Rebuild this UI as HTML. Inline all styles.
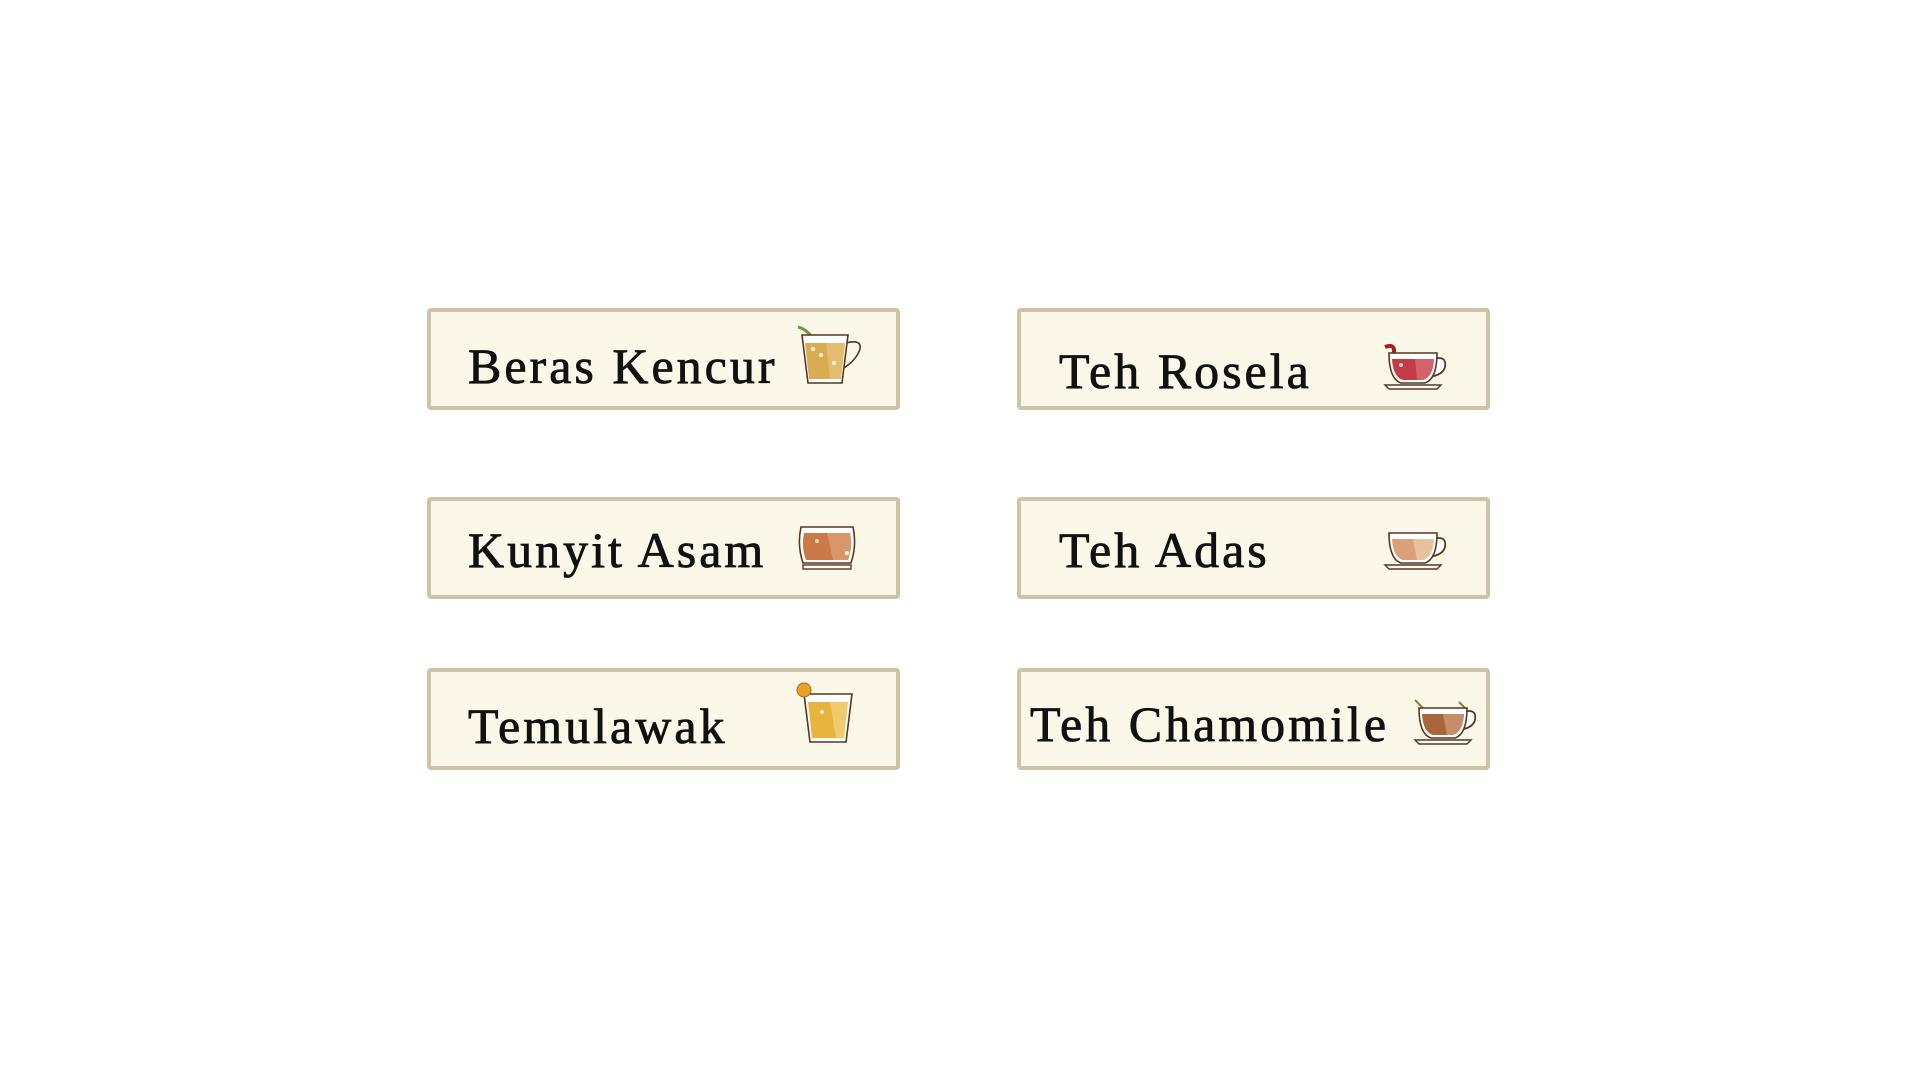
<!DOCTYPE html>
<html><head><meta charset="utf-8"><style>
html,body{margin:0;padding:0;background:#fff;width:1920px;height:1080px;overflow:hidden}
.b{position:absolute;width:465px;height:94px;border:4px solid #cdc3a6;border-radius:4px;background:#fbf8e9;box-sizing:content-box}
.t{position:absolute;font-family:"Liberation Serif",serif;font-size:50px;color:#111;white-space:nowrap;line-height:1;letter-spacing:3px;-webkit-text-stroke:0.8px #111}
svg{position:absolute}
</style></head><body>
<div class="b" style="left:427px;top:308px"></div>
<div class="b" style="left:1017px;top:308px"></div>
<div class="b" style="left:427px;top:497px"></div>
<div class="b" style="left:1017px;top:497px"></div>
<div class="b" style="left:427px;top:668px"></div>
<div class="b" style="left:1017px;top:668px"></div>

<div class="t" style="left:468px;top:341px">Beras Kencur</div>
<div class="t" style="left:1059px;top:346px">Teh Rosela</div>
<div class="t" style="left:468px;top:525px">Kunyit Asam</div>
<div class="t" style="left:1059px;top:525px">Teh Adas</div>
<div class="t" style="left:468px;top:701px">Temulawak</div>
<div class="t" style="left:1030px;top:699px">Teh Chamomile</div>

<svg style="left:796px;top:325px" width="70" height="62" viewBox="0 0 70 62">
<path d="M2 2 Q10 4 16 12" stroke="#6a9a48" stroke-width="3" fill="none"/>
<path d="M50 18 Q66 14 64 24 Q60 36 46 44" stroke="#5a3520" stroke-width="1.6" fill="none"/>
<path d="M6 10 H52 L46 58 H12 Z" fill="#fff" stroke="#5a3520" stroke-width="1.6"/>
<path d="M9 18 H49 L45 54 H13 Z" fill="#d8ac52"/>
<path d="M30 18 H49 L45 54 H34 Z" fill="#e8c680" opacity=".7"/>
<circle cx="17" cy="24" r="2" fill="#fff" opacity=".8"/><circle cx="25" cy="30" r="2" fill="#fff" opacity=".8"/><circle cx="38" cy="38" r="2" fill="#fff" opacity=".8"/>
</svg>

<svg style="left:1381px;top:343px" width="70" height="48" viewBox="0 0 70 48">
<path d="M4 4 Q14 0 13 10" stroke="#a02020" stroke-width="4" fill="none"/>
<path d="M52 16 Q66 12 64 24 Q62 32 48 34" stroke="#5a3520" stroke-width="1.8" fill="#fff"/>
<path d="M8 10 H56 Q56 36 44 40 H20 Q8 36 8 10Z" fill="#fff" stroke="#5a3520" stroke-width="1.6"/>
<path d="M11 16 H53 Q52 34 42 37 H22 Q12 34 11 16Z" fill="#c23c48"/>
<path d="M34 16 H53 Q52 34 42 37 H36Z" fill="#e07a84" opacity=".6"/>
<circle cx="20" cy="22" r="2" fill="#fff" opacity=".7"/>
<path d="M4 42 H60 L56 46 H8Z" fill="#fff" stroke="#5a3520" stroke-width="1.4"/>
</svg>

<svg style="left:797px;top:523px" width="60" height="50" viewBox="0 0 60 50">
<path d="M4 4 H56 Q60 22 54 40 H6 Q0 22 4 4Z" fill="#fff" stroke="#5a3520" stroke-width="1.6"/>
<path d="M7 10 H53 Q56 24 51 37 H9 Q4 24 7 10Z" fill="#c97a46"/>
<path d="M30 10 H53 Q56 24 51 37 H36Z" fill="#e0a478" opacity=".7"/>
<circle cx="20" cy="18" r="2" fill="#fff" opacity=".7"/><circle cx="50" cy="30" r="2" fill="#fff"/>
<rect x="6" y="42" width="48" height="4" fill="#fff" stroke="#5a3520" stroke-width="1.4"/>
</svg>

<svg style="left:1381px;top:527px" width="70" height="46" viewBox="0 0 70 46">
<path d="M52 12 Q66 8 64 20 Q62 28 48 30" stroke="#5a3520" stroke-width="1.8" fill="#fff"/>
<path d="M8 6 H56 Q56 32 44 36 H20 Q8 32 8 6Z" fill="#fff" stroke="#5a3520" stroke-width="1.6"/>
<path d="M11 12 H53 Q52 30 42 33 H22 Q12 30 11 12Z" fill="#d9a07a"/>
<path d="M32 12 H53 Q52 30 42 33 H36Z" fill="#f0d0b4" opacity=".7"/>
<path d="M4 38 H60 L56 42 H8Z" fill="#fff" stroke="#5a3520" stroke-width="1.4"/>
</svg>

<svg style="left:794px;top:682px" width="64" height="64" viewBox="0 0 64 64">
<path d="M10 12 H58 L52 60 H16 Z" fill="#fff" stroke="#5a3520" stroke-width="1.6"/>
<path d="M14 20 H54 L50 56 H18 Z" fill="#e8b440"/>
<path d="M36 20 H54 L50 56 H42Z" fill="#f4d480" opacity=".7"/>
<circle cx="28" cy="30" r="2" fill="#fff" opacity=".7"/>
<circle cx="10" cy="8" r="7" fill="#e8a028" stroke="#b06a10" stroke-width="1"/>
</svg>

<svg style="left:1411px;top:696px" width="70" height="52" viewBox="0 0 70 52">
<path d="M4 4 L14 14 M48 6 L54 12" stroke="#7a8a30" stroke-width="2"/>
<path d="M52 16 Q66 12 64 24 Q62 32 48 34" stroke="#5a3520" stroke-width="1.8" fill="#fff"/>
<path d="M8 12 H56 Q56 38 44 42 H20 Q8 38 8 12Z" fill="#fff" stroke="#5a3520" stroke-width="1.6"/>
<path d="M11 18 H53 Q52 36 42 39 H22 Q12 36 11 18Z" fill="#a8663a"/>
<path d="M32 18 H53 Q52 36 42 39 H36Z" fill="#d6a07a" opacity=".7"/>
<path d="M4 44 H60 L56 48 H8Z" fill="#fff" stroke="#5a3520" stroke-width="1.4"/>
</svg>
</body></html>
